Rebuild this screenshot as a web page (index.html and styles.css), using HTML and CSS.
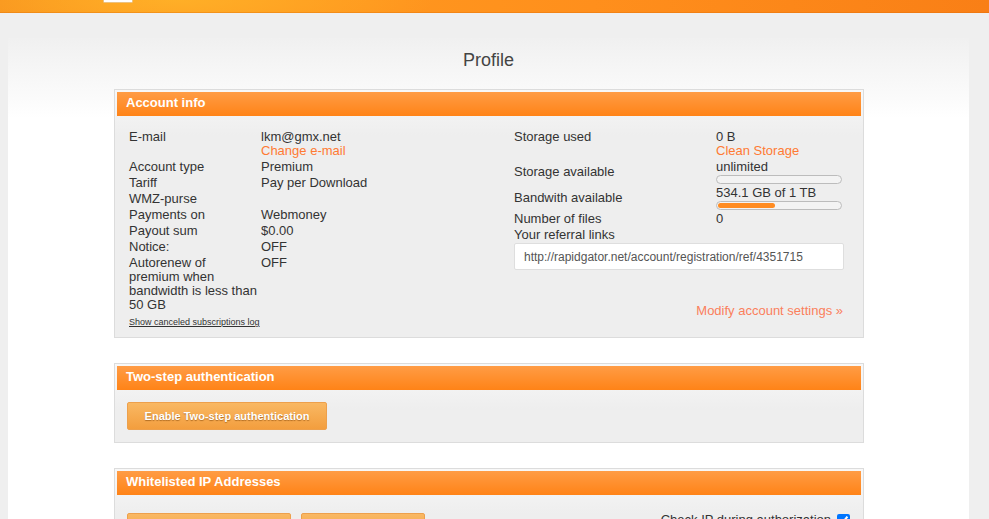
FILE: index.html
```html
<!DOCTYPE html>
<html>
<head>
<meta charset="utf-8">
<title>Profile</title>
<link rel="stylesheet" href="styles.css">
</head>
<body>
<div class="topbar"><span class="logo-edge"></span></div>
<div class="page">
  <h1 class="title">Profile</h1>

  <section class="panel">
    <div class="panel-head">Account info</div>
    <div class="panel-body account">
      <div class="col-left">
        <div class="kv"><div class="k">E-mail</div><div class="v">lkm@gmx.net<br><a class="link" href="#">Change e-mail</a></div></div>
        <div class="kv"><div class="k">Account type</div><div class="v">Premium</div></div>
        <div class="kv"><div class="k">Tariff</div><div class="v">Pay per Download</div></div>
        <div class="kv"><div class="k">WMZ-purse</div><div class="v"></div></div>
        <div class="kv"><div class="k">Payments on</div><div class="v">Webmoney</div></div>
        <div class="kv"><div class="k">Payout sum</div><div class="v">$0.00</div></div>
        <div class="kv"><div class="k">Notice:</div><div class="v">OFF</div></div>
        <div class="kv"><div class="k">Autorenew of premium when bandwidth is less than 50 GB</div><div class="v">OFF</div></div>
        <a class="small-link" href="#">Show canceled subscriptions log</a>
      </div>
      <div class="col-right">
        <div class="kv"><div class="k2">Storage used</div><div class="v">0 B<br><a class="link" href="#">Clean Storage</a></div></div>
        <div class="kv mid"><div class="k2">Storage available</div><div class="v">unlimited<div class="bar"></div></div></div>
        <div class="kv mid"><div class="k2">Bandwith available</div><div class="v">534.1 GB of 1 TB<div class="bar"><div class="fill" style="width:57px"></div></div></div></div>
        <div class="kv"><div class="k2">Number of files</div><div class="v">0</div></div>
        <div class="kv"><div class="k2">Your referral links</div></div>
        <input class="ref" type="text" value="http://rapidgator.net/account/registration/ref/4351715" readonly>
        <div class="modify"><a class="link2" href="#">Modify account settings &raquo;</a></div>
      </div>
    </div>
  </section>

  <section class="panel">
    <div class="panel-head">Two-step authentication</div>
    <div class="panel-body twostep">
      <button class="btn btn-2fa">Enable Two-step authentication</button>
    </div>
  </section>

  <section class="panel">
    <div class="panel-head">Whitelisted IP Addresses</div>
    <div class="panel-body iplist">
      <button class="btn btn-a" aria-label="Add IP address"></button>
      <button class="btn btn-b" aria-label="Delete all"></button>
      <label class="checkip">Check IP during authorization <input type="checkbox" checked></label>
    </div>
  </section>
</div>
</body>
</html>
```
FILE: styles.css
```css
html, body {
  margin: 0;
  padding: 0;
}
body {
  background: #efefef;
  font-family: "Liberation Sans", Arial, sans-serif;
  font-size: 13px;
  color: #333;
  overflow: hidden;
}
.topbar {
  height: 13px;
  display: flex;
  align-items: flex-start;
  background:
    radial-gradient(ellipse 260px 40px at 175px 0, rgba(255, 178, 40, 0.85), rgba(255, 160, 30, 0) 100%),
    linear-gradient(to right, #f8921e, #ff9c20 18%, #ff8f1c 60%, #f97f16);
  box-shadow: inset 0 -1px 0 rgba(220, 110, 10, 0.35);
}
.logo-edge {
  display: block;
  margin-left: 104px;
  width: 28px;
  height: 2px;
  background: #fff;
  box-shadow: 0 0 0 0.5px #d9d9d9;
}
.page {
  margin: 25px 0 0 8px;
  width: 961px;
  min-height: 600px;
  padding-top: 11px;
  background: linear-gradient(#f0f0f0, #fbfbfb 60px, #fff 80px);
}
.title {
  margin: 0 0 18px;
  text-align: center;
  font-weight: normal;
  font-size: 18px;
  line-height: 22px;
  color: #444;
}
.panel {
  width: 744px;
  margin: 0 0 25px 106px;
  border: 1px solid #dcdcdc;
  padding: 2px;
  background: linear-gradient(#f8f8f8, #eeeeee 45px, #eeeeee);
}
.panel-head {
  height: 24px;
  line-height: 22px;
  padding-left: 9px;
  background: linear-gradient(#ff9c45, #ff8317);
  color: #fff;
  font-weight: bold;
  font-size: 13px;
}
.panel-body.account {
  display: flex;
  align-items: flex-start;
  padding: 13px 17px 0 12px;
}
.col-left {
  width: 385px;
  flex: none;
}
.col-right {
  flex: 1;
  display: flex;
  flex-direction: column;
  padding-bottom: 16px;
}
.kv {
  display: flex;
  padding: 1px 0;
  line-height: 14px;
}
.kv.mid {
  align-items: center;
}
.k {
  width: 129px;
  padding-right: 3px;
  flex: none;
}
.k2 {
  width: 202px;
  flex: none;
}
.v {
  flex: 1;
}
.link {
  color: #ff7a33;
  text-decoration: none;
}
.link2 {
  color: #fb7f5c;
  text-decoration: none;
}
.small-link {
  display: inline-block;
  margin-top: 2px;
  font-size: 9px;
  line-height: 11px;
  color: #333;
  text-decoration: underline;
}
.bar {
  box-sizing: border-box;
  width: 126px;
  height: 9px;
  margin-top: 1px;
  border: 1px solid #bcbcbc;
  border-radius: 5px;
  background: #f3f3f3;
  padding: 1px;
}
.fill {
  height: 5px;
  border-radius: 3px;
  background: #ff8c22;
}
.ref {
  box-sizing: border-box;
  width: 330px;
  height: 27px;
  margin: 0;
  padding: 0 9px;
  border: 1px solid #dedede;
  border-radius: 2px;
  background: #fff;
  font-family: "Liberation Sans", Arial, sans-serif;
  font-size: 12px;
  color: #555;
  outline: none;
}
.modify {
  margin-top: 33px;
  text-align: right;
  line-height: 16px;
  font-size: 13px;
  padding-right: 1px;
}
.btn {
  box-sizing: border-box;
  height: 28px;
  border: 1px solid #eda04c;
  border-radius: 2px;
  background: linear-gradient(#f9b863, #f39e3e);
  color: #fff;
  font-family: "Liberation Sans", Arial, sans-serif;
  font-weight: bold;
  font-size: 11px;
  text-shadow: 0 1px 1px rgba(120, 60, 0, 0.55);
  padding: 0;
  cursor: pointer;
}
.panel-body.twostep {
  padding: 12px 10px 10px;
}
.btn-2fa {
  display: block;
  width: 200px;
}
.panel-body.iplist {
  display: flex;
  align-items: flex-start;
  gap: 10px;
  padding: 18px 8px 18px 10px;
}
.btn-a {
  width: 164px;
}
.btn-b {
  width: 124px;
}
.checkip {
  margin-left: auto;
  display: flex;
  align-items: center;
  gap: 2px;
  line-height: 14px;
}
.checkip input {
  margin: 0 3px 0 4px;
  width: 13px;
  height: 13px;
}
```
